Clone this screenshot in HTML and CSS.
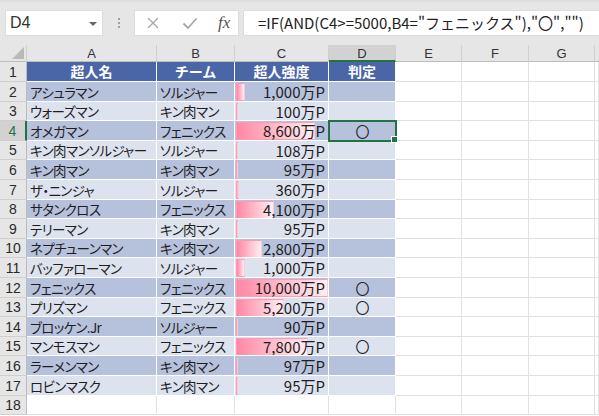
FILE: index.html
```html
<!DOCTYPE html>
<html lang="ja">
<head>
<meta charset="utf-8">
<link rel="stylesheet" href="styles.css">
</head>
<body>
<div class="toolbar">
  <div class="namebox"><span class="nb-text">D4</span><span class="nb-arrow"></span></div>
  <div class="grip"><i></i><i></i><i></i></div>
  <div class="fxbox">
    <svg class="ico" width="14" height="14" viewBox="0 0 14 14"><path d="M2 2 L12 12 M12 2 L2 12" stroke="#a8a8a8" stroke-width="1.4" fill="none"/></svg>
    <svg class="ico" width="16" height="14" viewBox="0 0 16 14"><path d="M1.5 7.5 L6 12 L14.5 2.5" stroke="#a8a8a8" stroke-width="1.8" fill="none"/></svg>
    <span class="fx">fx</span>
  </div>
  <div class="formula">=IF(AND(C4&gt;=5000,B4="フェニックス"),"〇","")</div>
</div>
<div class="sheet">
  <div class="corner"><span class="tri"></span></div>
  <div class="ch">A</div><div class="ch">B</div><div class="ch">C</div><div class="ch sel">D</div><div class="ch">E</div><div class="ch">F</div><div class="ch">G</div><div class="ch last"></div>

  <div class="rh">1</div>
  <div class="th">超人名</div><div class="th">チーム</div><div class="th">超人強度</div><div class="th">判定</div><div class="e"></div><div class="e"></div><div class="e"></div><div class="e"></div>

  <div class="rh">2</div>
  <div class="tc dk">アシュラマン</div><div class="tc dk">ソルジャー</div><div class="tc dk num"><span class="bar" style="width:10%"></span><span class="v">1,000万P</span></div><div class="tc dk ctr"></div><div class="e"></div><div class="e"></div><div class="e"></div><div class="e"></div>

  <div class="rh">3</div>
  <div class="tc lt">ウォーズマン</div><div class="tc lt">キン肉マン</div><div class="tc lt num"><span class="bar" style="width:1%"></span><span class="v">100万P</span></div><div class="tc lt ctr"></div><div class="e"></div><div class="e"></div><div class="e"></div><div class="e"></div>

  <div class="rh rsel">4</div>
  <div class="tc dk">オメガマン</div><div class="tc dk">フェニックス</div><div class="tc dk num"><span class="bar" style="width:86%"></span><span class="v">8,600万P</span></div><div class="tc dk ctr active">〇</div><div class="e"></div><div class="e"></div><div class="e"></div><div class="e"></div>

  <div class="rh">5</div>
  <div class="tc lt">キン肉マンソルジャー</div><div class="tc lt">ソルジャー</div><div class="tc lt num"><span class="bar" style="width:1.08%"></span><span class="v">108万P</span></div><div class="tc lt ctr"></div><div class="e"></div><div class="e"></div><div class="e"></div><div class="e"></div>

  <div class="rh">6</div>
  <div class="tc dk">キン肉マン</div><div class="tc dk">キン肉マン</div><div class="tc dk num"><span class="bar" style="width:0.95%"></span><span class="v">95万P</span></div><div class="tc dk ctr"></div><div class="e"></div><div class="e"></div><div class="e"></div><div class="e"></div>

  <div class="rh">7</div>
  <div class="tc lt">ザ・ニンジャ</div><div class="tc lt">ソルジャー</div><div class="tc lt num"><span class="bar" style="width:3.6%"></span><span class="v">360万P</span></div><div class="tc lt ctr"></div><div class="e"></div><div class="e"></div><div class="e"></div><div class="e"></div>

  <div class="rh">8</div>
  <div class="tc dk">サタンクロス</div><div class="tc dk">フェニックス</div><div class="tc dk num"><span class="bar" style="width:41%"></span><span class="v">4,100万P</span></div><div class="tc dk ctr"></div><div class="e"></div><div class="e"></div><div class="e"></div><div class="e"></div>

  <div class="rh">9</div>
  <div class="tc lt">テリーマン</div><div class="tc lt">キン肉マン</div><div class="tc lt num"><span class="bar" style="width:0.95%"></span><span class="v">95万P</span></div><div class="tc lt ctr"></div><div class="e"></div><div class="e"></div><div class="e"></div><div class="e"></div>

  <div class="rh">10</div>
  <div class="tc dk">ネプチューンマン</div><div class="tc dk">キン肉マン</div><div class="tc dk num"><span class="bar" style="width:28%"></span><span class="v">2,800万P</span></div><div class="tc dk ctr"></div><div class="e"></div><div class="e"></div><div class="e"></div><div class="e"></div>

  <div class="rh">11</div>
  <div class="tc lt">バッファローマン</div><div class="tc lt">ソルジャー</div><div class="tc lt num"><span class="bar" style="width:10%"></span><span class="v">1,000万P</span></div><div class="tc lt ctr"></div><div class="e"></div><div class="e"></div><div class="e"></div><div class="e"></div>

  <div class="rh">12</div>
  <div class="tc dk">フェニックス</div><div class="tc dk">フェニックス</div><div class="tc dk num"><span class="bar" style="width:100%"></span><span class="v">10,000万P</span></div><div class="tc dk ctr">〇</div><div class="e"></div><div class="e"></div><div class="e"></div><div class="e"></div>

  <div class="rh">13</div>
  <div class="tc lt">プリズマン</div><div class="tc lt">フェニックス</div><div class="tc lt num"><span class="bar" style="width:52%"></span><span class="v">5,200万P</span></div><div class="tc lt ctr">〇</div><div class="e"></div><div class="e"></div><div class="e"></div><div class="e"></div>

  <div class="rh">14</div>
  <div class="tc dk">ブロッケン.Jr</div><div class="tc dk">ソルジャー</div><div class="tc dk num"><span class="bar" style="width:0.9%"></span><span class="v">90万P</span></div><div class="tc dk ctr"></div><div class="e"></div><div class="e"></div><div class="e"></div><div class="e"></div>

  <div class="rh">15</div>
  <div class="tc lt">マンモスマン</div><div class="tc lt">フェニックス</div><div class="tc lt num"><span class="bar" style="width:78%"></span><span class="v">7,800万P</span></div><div class="tc lt ctr">〇</div><div class="e"></div><div class="e"></div><div class="e"></div><div class="e"></div>

  <div class="rh">16</div>
  <div class="tc dk">ラーメンマン</div><div class="tc dk">キン肉マン</div><div class="tc dk num"><span class="bar" style="width:0.97%"></span><span class="v">97万P</span></div><div class="tc dk ctr"></div><div class="e"></div><div class="e"></div><div class="e"></div><div class="e"></div>

  <div class="rh">17</div>
  <div class="tc lt">ロビンマスク</div><div class="tc lt">キン肉マン</div><div class="tc lt num"><span class="bar" style="width:0.95%"></span><span class="v">95万P</span></div><div class="tc lt ctr"></div><div class="e"></div><div class="e"></div><div class="e"></div><div class="e"></div>

  <div class="rh">18</div>
  <div class="e"></div><div class="e"></div><div class="e"></div><div class="e"></div><div class="e"></div><div class="e"></div><div class="e"></div><div class="e"></div>
</div>
</body>
</html>
```

FILE: styles.css
```css
* { box-sizing: border-box; }
html, body { margin: 0; padding: 0; background: #ffffff; overflow: hidden; }
body {
  width: 599px;
  height: 416px;
  font-family: "Noto Sans CJK JP", "Noto Sans", sans-serif;
  color: #222;
}

/* ---------- formula bar ---------- */
.toolbar {
  height: 45px;
  display: flex;
  align-items: flex-start;
  padding: 10px 0 0 5px;
  background: linear-gradient(#d9d9d9 0, #e6e6e6 3px, #e6e6e6 100%);
}
.namebox {
  width: 98px;
  height: 26px;
  background: #fff;
  border: 1px solid #dcdcdc;
  display: flex;
  align-items: center;
  justify-content: space-between;
  padding: 0 5px 0 4px;
}
.nb-text {
  font-family: "Liberation Sans", sans-serif;
  font-size: 16px;
  color: #333;
}
.nb-arrow {
  width: 0; height: 0;
  border-left: 4px solid transparent;
  border-right: 4px solid transparent;
  border-top: 4px solid #666;
  margin-top: 1px;
}
.grip {
  width: 31px;
  height: 26px;
  display: flex;
  flex-direction: column;
  align-items: center;
  justify-content: center;
  gap: 2px;
}
.grip i {
  display: block;
  width: 2px; height: 2px;
  background: #a0a0a0;
}
.fxbox {
  width: 105px;
  height: 26px;
  background: #fff;
  border: 1px solid #dcdcdc;
  display: flex;
  align-items: center;
  padding: 0 0 0 11px;
  gap: 22px;
}
.fx {
  font-family: "Liberation Serif", "DejaVu Serif", serif;
  font-style: italic;
  font-size: 17px;
  color: #555;
  margin-left: -2px;
  line-height: 1;
  padding-bottom: 2px;
}
.formula {
  flex: 1;
  height: 26px;
  margin-left: 4px;
  background: #fff;
  border: 1px solid #dcdcdc;
  border-right: none;
  padding-left: 14px;
  font-size: 15px;
  line-height: 24px;
  color: #222;
  white-space: nowrap;
  overflow: hidden;
}

/* ---------- sheet ---------- */
.sheet {
  display: grid;
  grid-template-columns: 27px 130px 78px 94px 67px 66px 67px 66px 1fr;
  grid-template-rows: 17px 20px 20px 19px 20px 19px 20px 20px 19px 20px 19px 20px 20px 19px 20px 19px 20px 20px 19px;
  font-size: 14px;
  line-height: 18px;
}
.sheet > div { min-height: 0; overflow: hidden; }
.corner {
  background: #e6e6e6;
  border-right: 1px solid #cfcfcf;
  border-bottom: 1px solid #bcbcbc;
  display: flex;
  align-items: flex-end;
  justify-content: flex-end;
  padding: 0 2px 2px 0;
}
.tri {
  width: 0; height: 0;
  border-left: 12px solid transparent;
  border-bottom: 12px solid #b9b9b9;
}
.ch {
  background: #e6e6e6;
  border-right: 1px solid #cfcfcf;
  border-bottom: 1px solid #bcbcbc;
  font-family: "Liberation Sans", sans-serif;
  font-size: 13px;
  color: #333;
  text-align: center;
  line-height: 17px;
}
.ch.sel {
  background: #d2d2d2;
  border-bottom: 2px solid #217346;
}
.ch.last { border-right: none; }
.rh {
  background: #e6e6e6;
  border-right: 1px solid #bcbcbc;
  border-bottom: 1px solid #cfcfcf;
  font-family: "Liberation Sans", sans-serif;
  font-size: 14px;
  color: #2a2a2a;
  display: flex;
  align-items: flex-end;
  justify-content: center;
  padding-bottom: 1px;
  line-height: 16px;
}
.rh.rsel {
  background: #d2d2d2;
  color: #217346;
  border-right: 2px solid #217346;
}
.e {
  border-right: 1px solid #e1e1e1;
  border-bottom: 1px solid #e1e1e1;
}

/* table cells */
.th, .tc {
  border-right: 1px solid #ffffff;
  border-bottom: 1px solid #ffffff;
  white-space: nowrap;
}
.th {
  background: #4b66a6;
  color: #ffffff;
  font-weight: bold;
  text-align: center;
  line-height: 19px;
}
.tc {
  display: flex;
  align-items: center;
  padding: 0 2px 0 3px;
  font-size: 13.5px;
  letter-spacing: -0.6px;
  font-feature-settings: "palt";
  color: #1e1e1e;
}
.dk { background: #b6c1dc; }
.lt { background: #dce2ee; }
.ctr { justify-content: center; letter-spacing: 0; font-size: 14px; }
.num {
  display: grid;
  padding: 1px 0 1px 1px;
  font-feature-settings: normal;
  letter-spacing: 0;
}
.num .bar {
  grid-area: 1 / 1;
  justify-self: start;
  align-self: stretch;
  min-width: 2px;
  background: linear-gradient(to right, #ff88a3, #ffd5df 75%, #ffeef2);
  border: 1px solid #ff9ab2;
  border-right-color: #ffc9d6;
}
.num .v {
  grid-area: 1 / 1;
  justify-self: end;
  align-self: center;
  padding-right: 3px;
  font-size: 15px;
  position: relative;
}
.sheet > .active {
  position: relative;
  overflow: visible;
  outline: 2px solid #217346;
  outline-offset: -1px;
}
.active::after {
  content: "";
  position: absolute;
  right: -3px;
  bottom: -3px;
  width: 5px;
  height: 5px;
  background: #217346;
  border: 1px solid #fff;
}
```
